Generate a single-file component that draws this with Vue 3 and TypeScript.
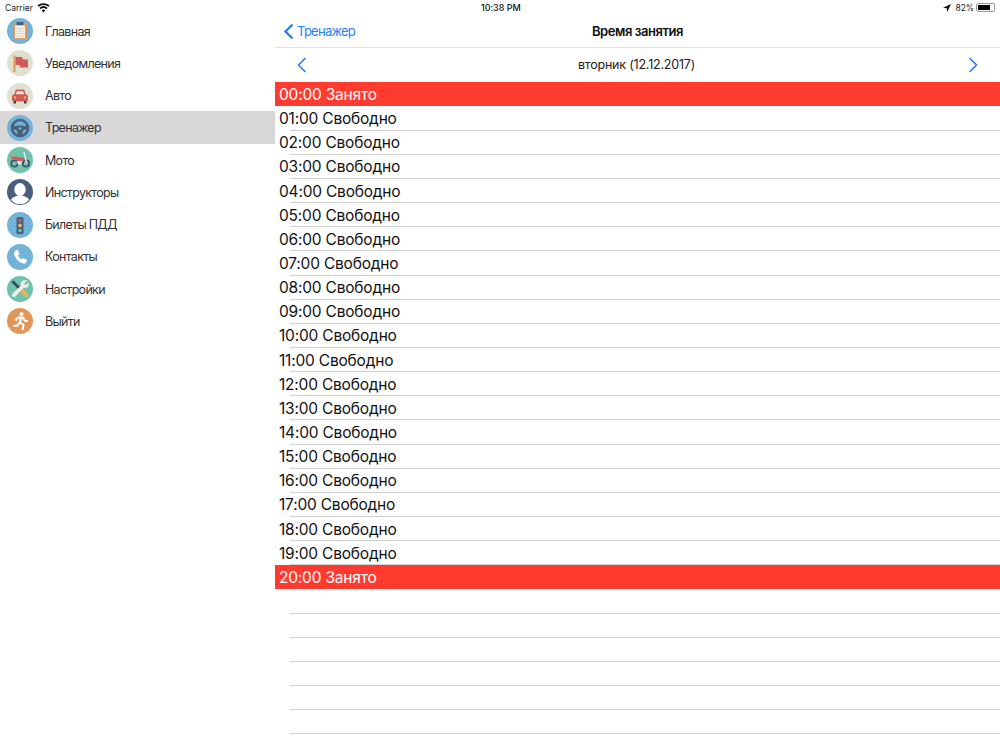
<script setup lang="ts">
const menu = [
  { id: 'home', label: 'Главная', bg: '#73b3d8' },
  { id: 'flag', label: 'Уведомления', bg: '#e0e0d0' },
  { id: 'car', label: 'Авто', bg: '#e0e0d0' },
  { id: 'wheel', label: 'Тренажер', bg: '#73b3d8', active: true },
  { id: 'moto', label: 'Мото', bg: '#6fc2ab' },
  { id: 'user', label: 'Инструкторы', bg: '#4a5f7e' },
  { id: 'light', label: 'Билеты ПДД', bg: '#73b3d8' },
  { id: 'phone', label: 'Контакты', bg: '#73b3d8' },
  { id: 'tools', label: 'Настройки', bg: '#6fc2ab' },
  { id: 'run', label: 'Выйти', bg: '#e2975a' },
]
const busy = [0, 20]
const slots = Array.from({ length: 21 }, (_, i) => ({
  time: `${String(i).padStart(2, '0')}:00`,
  busy: busy.includes(i),
}))
const empties = 6
</script>

<template>
  <div class="app">
    <aside class="side">
      <div class="status-left">
        <span>Carrier</span>
        <svg width="13" height="10" viewBox="0 0 13 10"><path d="M6.5 9.5 L4.6 7.3 A3 3 0 0 1 8.4 7.3 Z M3.6 6.2 L2.4 4.8 A6.3 6.3 0 0 1 10.6 4.8 L9.4 6.2 A4.6 4.6 0 0 0 3.6 6.2 Z M1.5 3.8 L.3 2.5 A9.4 9.4 0 0 1 12.7 2.5 L11.5 3.8 A7.8 7.8 0 0 0 1.5 3.8 Z" fill="#111"/></svg>
      </div>
      <ul class="menu">
        <li v-for="m in menu" :key="m.id" class="item" :class="{ active: m.active }">
          <svg class="ico" width="26" height="26" viewBox="0 0 26 26">
            <circle cx="13" cy="13" r="13" :fill="m.bg" />
            <template v-if="m.id === 'home'">
              <rect x="6" y="5" width="14" height="17" rx="1" fill="#dd9b63" />
              <rect x="8" y="7.5" width="10" height="12.5" fill="#f2efe2" />
              <path d="M9.500 10.500h7M9.500 13h7M9.500 15.500h7M9.500 18h7" stroke="#dcd8c8" stroke-width="1" />
              <rect x="9.500" y="4" width="7" height="3" fill="#4a5f7e" />
            </template>
            <template v-else-if="m.id === 'flag'">
              <rect x="6.500" y="5.500" width="2" height="16.500" fill="#e2975a" />
              <path d="M8.500 7h6.500l1 2.500h5v8h-7.500l-1-2.500h-4z" fill="#cf5a58" />
            </template>
            <template v-else-if="m.id === 'car'">
              <path d="M7 12 8.500 7.500Q8.900 6.500 10 6.500h6Q17.100 6.500 17.500 7.500L19 12z" fill="#cf5a58" />
              <path d="M8.800 11.500 9.900 8.200h6.200l1.100 3.300z" fill="#e8e8dc" />
              <rect x="5" y="11.500" width="16" height="7" rx="1.800" fill="#cf5a58" />
              <rect x="6.500" y="18" width="2.500" height="2.500" fill="#33455f" />
              <rect x="17" y="18" width="2.500" height="2.500" fill="#33455f" />
              <circle cx="8" cy="14.500" r="1.200" fill="#f0c060" />
              <circle cx="18" cy="14.500" r="1.200" fill="#f0c060" />
            </template>
            <template v-else-if="m.id === 'wheel'">
              <circle cx="13" cy="13" r="8" fill="none" stroke="#4a5f7e" stroke-width="2.600" />
              <path d="M5 11.500Q13 9.500 21 11.500v2L16 15.500 15 20.500h-4L10 15.500 5 13.500z" fill="#4a5f7e" />
              <circle cx="13" cy="13.500" r="1.300" fill="#6fc2ab" />
            </template>
            <template v-else-if="m.id === 'moto'">
              <circle cx="7.500" cy="16.500" r="3.200" fill="none" stroke="#3f5570" stroke-width="1.800" />
              <circle cx="19" cy="16.500" r="3.200" fill="none" stroke="#3f5570" stroke-width="1.800" />
              <path d="M16 6.500 17.200 6 19.500 16" fill="none" stroke="#eee" stroke-width="1.300" />
              <path d="M3.500 9.500h7l1 1h5.500l.8 2.500-3.800 1h-3.500L9 12H5z" fill="#cf5a58" />
              <path d="M9.500 14h5.500l-1 3.500h-3z" fill="#e8e8dc" />
            </template>
            <template v-else-if="m.id === 'user'">
              <ellipse cx="13" cy="10.500" rx="5.700" ry="6.500" fill="#fff" />
              <path d="M3.800 20.500Q6 17.800 10.500 16.500h5Q20 17.800 22.200 20.500A11.500 11.500 0 0 1 3.800 20.500z" fill="#fff" />
            </template>
            <template v-else-if="m.id === 'light'">
              <rect x="9.500" y="5" width="7" height="17" rx="1.500" fill="#4a5f7e" />
              <circle cx="13" cy="8.500" r="1.800" fill="#cf5a58" />
              <circle cx="13" cy="13.500" r="1.800" fill="#f0c060" />
              <circle cx="13" cy="18.500" r="1.800" fill="#6fc2ab" />
            </template>
            <template v-else-if="m.id === 'phone'">
              <path d="M8.500 6.500 11 6l1.500 4-1.500 1.500q1 2.500 3.500 4l1.500-1.500 4 1.800-.8 2.700q-1 1.500-3 1-7-2-9.200-9.500-.3-2 1.500-3.500z" fill="#fff" />
            </template>
            <template v-else-if="m.id === 'tools'">
              <path d="M4.500 6 6.500 4.500 13.500 11.500 11.500 13.500z" fill="#33455f" />
              <path d="M13 12 15 11 22 19.500 19.500 22 12 14.500z" fill="#efb55d" />
              <path d="M20.500 4.500 17 7.500 18.500 9 21.500 6.500Q22.500 9.500 20.500 11 18.500 12.500 16.500 11.500L8.500 20.500A2 2 0 0 1 5.500 17.500L14 9.800Q13 7.300 14.500 5.500 16.500 3.700 20.500 4.500z" fill="#f0f0ea" />
            </template>
            <template v-else-if="m.id === 'run'">
              <circle cx="14.500" cy="6" r="2" fill="#fff" />
              <path d="M11 9.500h5l2 3.500h3M14 9.500l-1 5 3.500 2.500-1 5M12.500 14.500l-2 3-4 .5M11 9.500 8.500 12.500" fill="none" stroke="#fff" stroke-width="2.100" stroke-linejoin="round" />
            </template>
          </svg>
          <span class="label">{{ m.label }}</span>
        </li>
      </ul>
    </aside>

    <main class="main">
      <div class="status">
        <span class="clock">10:38 PM</span>
        <div class="status-right">
          <svg class="arrow" width="8" height="8" viewBox="0 0 9 9"><path d="M9 0 0 4.200 4.200 4.800 4.800 9z" fill="#111" /></svg>
          <span>82%</span>
          <span class="battery"><span class="level"></span></span>
        </div>
      </div>
      <header class="nav">
        <div class="back">
          <svg width="11" height="17" viewBox="0 0 11 17"><path d="M9.500 1.500 2.500 8.500l7 7" fill="none" stroke="#1a82fb" stroke-width="2.300" /></svg>
          <span>Тренажер</span>
        </div>
        <h1 class="title">Время занятия</h1>
      </header>
      <div class="date">
        <svg width="10" height="16" viewBox="0 0 10 16"><path d="M8.500 1 1.500 8l7 7" fill="none" stroke="#1a82fb" stroke-width="1.600" /></svg>
        <span class="day">вторник (12.12.2017)</span>
        <svg width="10" height="16" viewBox="0 0 10 16"><path d="M1.500 1l7 7-7 7" fill="none" stroke="#1a82fb" stroke-width="1.600" /></svg>
      </div>
      <div class="list">
        <div v-for="s in slots" :key="s.time" class="row" :class="{ busy: s.busy }">
          {{ s.time }} {{ s.busy ? 'Занято' : 'Свободно' }}
        </div>
        <div v-for="n in empties" :key="n" class="row"></div>
      </div>
    </main>
  </div>
</template>

<style scoped>
.app {
  display: flex;
  width: 1000px;
  height: 750px;
  overflow: hidden;
  background: #fff;
  font-family: Inter, "Liberation Sans", sans-serif;
  color: #111;
}
.side {
  width: 275px;
  flex: none;
}
.status-left {
  height: 15px;
  padding-left: 5px;
  display: flex;
  align-items: center;
  gap: 4px;
  font-size: 8.500px;
  color: #222;
}
.menu {
  list-style: none;
  margin: 0;
  padding: 0;
}
.item {
  height: 32.250px;
  display: flex;
  align-items: center;
  padding-left: 7px;
  box-sizing: border-box;
}
.item.active {
  background: #d8d8d8;
  margin-top: -0.600px;
  height: 32.850px;
}
.ico {
  flex: none;
}
.label {
  margin-left: 12px;
  font-size: 12.500px;
  letter-spacing: -0.7px;
  color: #333;
}
.main {
  flex: 1;
  min-width: 0;
}
.status {
  height: 15px;
  position: relative;
  font-size: 9px;
  display: flex;
  align-items: center;
  justify-content: flex-end;
  padding-right: 5px;
}
.clock {
  position: absolute;
  left: 206px;
  font-weight: 500;
  letter-spacing: -0.050px;
}
.status-right {
  display: flex;
  align-items: center;
  gap: 2px;
  font-size: 8.500px;
  letter-spacing: -0.1px;
  color: #222;
}
.arrow {
  margin-right: 3px;
}
.battery {
  width: 19px;
  height: 9px;
  border: 1px solid #999;
  border-radius: 2px;
  padding: 1px;
  box-sizing: border-box;
  display: flex;
}
.level {
  width: 82%;
  background: #000;
}
.nav {
  height: 33px;
  border-bottom: 1px solid #e2e2e2;
  position: relative;
  display: flex;
  align-items: center;
  justify-content: center;
  box-sizing: border-box;
}
.back {
  position: absolute;
  left: 8px;
  display: flex;
  align-items: center;
  gap: 3px;
  color: #1a82fb;
  font-size: 13px;
  letter-spacing: -0.75px;
}
.title {
  margin: 0;
  font-size: 13px;
  font-weight: 600;
  letter-spacing: -0.45px;
  color: #111;
}
.date {
  height: 34px;
  display: flex;
  align-items: center;
  justify-content: space-between;
  padding: 0 22px;
  font-size: 12.500px;
  letter-spacing: -0.2px;
  color: #222;
}
.day {
  padding-bottom: 2px;
  padding-right: 2px;
}
.row {
  height: 24.150px;
  box-sizing: border-box;
  padding-left: 4px;
  font-size: 15.500px;
  letter-spacing: -0.2px;
  line-height: 25.500px;
  white-space: nowrap;
  position: relative;
  color: #111;
}
.row::after {
  content: "";
  position: absolute;
  left: 15px;
  right: 0;
  bottom: -0.500px;
  height: 1px;
  background: #d0d0d0;
}
.row.busy {
  background: #ff3b30;
  color: #fff;
}
.row.busy::after {
  display: none;
}
</style>
